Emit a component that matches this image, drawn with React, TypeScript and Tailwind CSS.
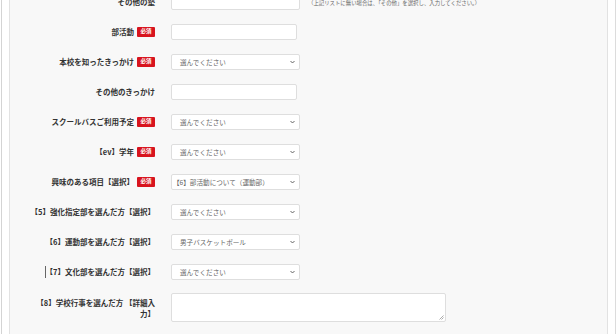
import React from "react";

const FONT = { fontFamily: '"Noto Sans CJK JP", "Noto Sans", sans-serif' };

function Badge() {
  return (
    <span className="inline-flex items-center justify-center w-[18px] h-[10px] bg-[#d8141e] text-white text-[5.5px] font-bold leading-none rounded-[1px] shrink-0">
      必須
    </span>
  );
}

function Chevron() {
  return (
    <svg width="5" height="3" viewBox="0 0 5 3" className="absolute right-[4px] top-1/2 -translate-y-1/2">
      <path d="M0.5 0.5 L2.5 2.5 L4.5 0.5" fill="none" stroke="#555" strokeWidth="0.9" />
    </svg>
  );
}

function Select({ value, offset }: { value: string; offset?: boolean }) {
  return (
    <div className="relative w-[129px] h-[16px] bg-white border border-[#dedede] rounded-[2px] flex items-center">
      <span className={`text-[6.6px] text-[#666] leading-none ${offset ? "pl-[1px]" : "pl-[8px]"}`}>{value}</span>
      <Chevron />
    </div>
  );
}

function Input({ w }: { w: string }) {
  return <div className={`${w} h-[16px] bg-white border border-[#dedede] rounded-[2px]`} />;
}

function Row({
  label,
  req,
  children,
  cursor,
}: {
  label: string;
  req?: boolean;
  children: React.ReactNode;
  cursor?: boolean;
}) {
  return (
    <div className="flex items-center h-[30px]">
      <div className="relative w-[120px] flex justify-end items-center gap-[3px]">
        {cursor && <span className="absolute left-[10px] top-1/2 -translate-y-1/2 w-[1px] h-[12px] bg-[#666]" />}
        <span className="text-[7.5px] font-bold text-[#333] leading-none whitespace-nowrap">{label}</span>
        {req && <Badge />}
      </div>
      <div className="ml-[16px] flex items-center">{children}</div>
    </div>
  );
}

export default function App() {
  return (
    <div className="w-[616px] h-[334px] bg-white flex overflow-hidden" style={FONT}>
      <div className="w-[1px]" />
      <div className="w-[1px] h-full bg-[#d4d4d4]" />
      <div className="w-[7px]" />
      <div className="w-[599px] h-full bg-[#f8f8f8] border-x border-[#e2e2e2] overflow-hidden">
        <div className="pl-[25px] -mt-[13px]">
          <Row label="その他の塾">
            <Input w="w-[129px]" />
            <span className="ml-[8px] mt-[3px] text-[5.4px] text-[#666] whitespace-nowrap leading-none">
              （上記リストに無い場合は、「その他」を選択し、入力してください。）
            </span>
          </Row>
          <Row label="部活動" req>
            <Input w="w-[126px]" />
          </Row>
          <Row label="本校を知ったきっかけ" req>
            <Select value="選んでください" />
          </Row>
          <Row label="その他のきっかけ">
            <Input w="w-[126px]" />
          </Row>
          <Row label="スクールバスご利用予定" req>
            <Select value="選んでください" />
          </Row>
          <Row label="【ev】学年" req>
            <Select value="選んでください" />
          </Row>
          <Row label="興味のある項目【選択】" req>
            <Select value="【6】部活動について（運動部）" offset />
          </Row>
          <Row label="【5】強化指定部を選んだ方【選択】">
            <Select value="選んでください" />
          </Row>
          <Row label="【6】運動部を選んだ方【選択】">
            <Select value="男子バスケットボール" />
          </Row>
          <Row label="【7】文化部を選んだ方【選択】" cursor>
            <Select value="選んでください" />
          </Row>
          <div className="flex items-start pt-[6px]">
            <div className="w-[120px] pt-[4px] text-right text-[7.5px] font-bold text-[#333] leading-[11px]">
              【8】学校行事を選んだ方 【詳細入力】
            </div>
            <div className="ml-[16px] relative w-[275px] h-[29px] bg-white border border-[#dedede] rounded-[2px]">
              <svg width="5" height="5" viewBox="0 0 5 5" className="absolute right-[1px] bottom-[1px]">
                <path d="M4.5 0.5 L0.5 4.5 M4.5 2.5 L2.5 4.5" stroke="#888" strokeWidth="0.7" />
              </svg>
            </div>
          </div>
        </div>
      </div>
      <div className="w-[7px]" />
      <div className="w-[1px] h-full bg-[#dcdcdc]" />
    </div>
  );
}
